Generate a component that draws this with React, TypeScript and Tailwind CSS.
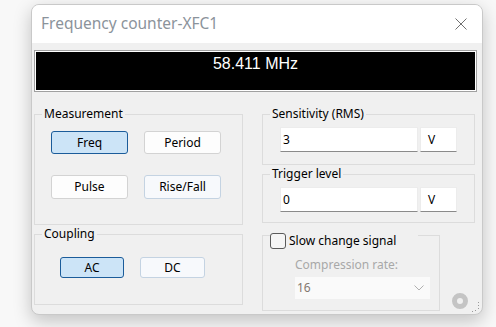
import type { ReactNode } from 'react';

const Btn = ({ label, active, w, h, tint }: { label: string; active?: boolean; w: string; h: string; tint?: boolean }) => {
  const base = 'flex items-center justify-center rounded-[3px] border text-[12px] text-black';
  const look = active
    ? 'bg-[#cce4f7] border-[#1b5c9a]'
    : tint
    ? 'bg-[#f7f9fc] border-[#c4d3e2]'
    : 'bg-[#fdfdfd] border-[#d3d3d3]';
  return <div className={`${base} ${look} ${w} ${h}`}>{label}</div>;
};

const Group = ({ title, className, children }: { title: string; className: string; children: ReactNode }) => (
  <fieldset className={`border border-[#dcdcdc] ${className}`}>
    <legend className="ml-[7px] px-[2px] text-[12px] leading-[16px] text-black">{title}</legend>
    {children}
  </fieldset>
);

const ValueRow = ({ value }: { value: string }) => (
  <div className="flex gap-[2px] pl-[17px] pt-[5px]">
    <div className="w-[138px] h-[25px] bg-white border border-[#ececec] border-b-[#8a8a8a] pl-[2px] text-[12px] leading-[23px] text-black">
      {value}
    </div>
    <div className="w-[37px] h-[25px] bg-white border border-[#ececec] border-b-[#8a8a8a] pl-[7px] text-[12px] leading-[23px] text-black">
      V
    </div>
  </div>
);

export default function App() {
  return (
    <div className="w-[496px] h-[327px] bg-[#f8f8f8] pt-[4px] pl-[31px] overflow-hidden" style={{ fontFamily: '"Noto Sans", sans-serif' }}>
      <div className="relative w-[452px] h-[311px] rounded-[8px] border border-[#c9c9c9] bg-[#f0f0f0] overflow-hidden shadow-[0_6px_18px_rgba(0,0,0,0.22)]">
        {/* title bar */}
        <div className="h-[38px] bg-white flex items-center justify-between pl-[9px] pr-[15px]">
          <span className="text-[15.5px] text-[#8b939b] pb-[1px]">Frequency counter-XFC1</span>
          <svg width="12" height="12" viewBox="0 0 12 12">
            <path d="M0.5 0.5 L11.5 11.5 M11.5 0.5 L0.5 11.5" stroke="#707070" strokeWidth="1" fill="none" />
          </svg>
        </div>

        {/* display */}
        <div className="mt-[7px] ml-[2px] mr-[5px] h-[42px] border border-[#a0a0a0]">
          <div className="h-full border border-white bg-black flex justify-center pt-[2px]">
            <span className="text-white text-[16px] leading-[20px]" style={{ fontFamily: '"Liberation Sans", Arial, sans-serif' }}>
              58.411 MHz
            </span>
          </div>
        </div>

        <div className="flex ml-[2px] mt-[14px] gap-[19px]">
          {/* left column */}
          <div className="w-[209px] flex flex-col">
            <Group title="Measurement" className="h-[119px]">
              <div className="grid grid-cols-[77px_77px] gap-x-[16px] gap-y-[21px] pl-[16px] pt-[9px]">
                <Btn label="Freq" active w="w-[77px]" h="h-[23px]" />
                <Btn label="Period" w="w-[77px]" h="h-[23px]" />
                <Btn label="Pulse" w="w-[77px]" h="h-[24px]" />
                <Btn label="Rise/Fall" tint w="w-[77px]" h="h-[24px]" />
              </div>
            </Group>
            <Group title="Coupling" className="h-[79px] mt-[1px]">
              <div className="flex gap-[16px] pl-[25px] pt-[15px]">
                <Btn label="AC" active w="w-[64px]" h="h-[21px]" />
                <Btn label="DC" tint w="w-[65px]" h="h-[21px]" />
              </div>
            </Group>
          </div>

          {/* right column */}
          <div className="w-[213px] flex flex-col">
            <Group title="Sensitivity (RMS)" className="h-[59px]">
              <ValueRow value="3" />
            </Group>
            <Group title="Trigger level" className="h-[57px] mt-[1px]">
              <ValueRow value="0" />
            </Group>
            <fieldset className="w-[178px] h-[78px] mt-[10px] border border-[#dcdcdc]">
              <legend className="ml-[7px] pr-[22px] h-[5px] overflow-visible">
                <div className="flex items-start gap-[3px]">
                  <div className="w-[16px] h-[16px] rounded-[3px] border border-[#5a5a5a] bg-[#f5f5f5]" />
                  <span className="text-[12px] leading-[16px] text-black">Slow change signal</span>
                </div>
              </legend>
              <div className="pl-[32px] pt-[19px]">
                <div className="text-[12px] leading-[16px] text-[#a8a8a8]">Compression rate:</div>
                <div className="mt-[4px] w-[135px] h-[22px] bg-[#fafafa] flex items-center justify-between pl-[2px] pr-[6px]">
                  <span className="text-[12px] text-[#84786f]">16</span>
                  <svg width="10" height="6" viewBox="0 0 10 6">
                    <path d="M0.5 0.5 L5 5 L9.5 0.5" stroke="#b0b0b0" strokeWidth="1" fill="none" />
                  </svg>
                </div>
              </div>
            </fieldset>
          </div>
        </div>

        {/* resize grip */}
        <svg className="absolute left-[420px] top-[288px]" width="16" height="16" viewBox="0 0 16 16">
          <circle cx="8" cy="8" r="5.5" fill="none" stroke="#c4c4c4" strokeWidth="5" />
        </svg>
        <svg className="absolute right-[1px] bottom-[1px]" width="10" height="12" viewBox="0 0 10 12">
          <rect x="7" y="1" width="1" height="1" fill="#9a9a9a" />
          <rect x="7" y="4" width="1" height="1" fill="#9a9a9a" />
          <rect x="7" y="7" width="1" height="1" fill="#9a9a9a" />
          <rect x="4" y="9" width="1" height="1" fill="#9a9a9a" />
          <rect x="1" y="10" width="1" height="1" fill="#9a9a9a" />
        </svg>
      </div>
    </div>
  );
}
